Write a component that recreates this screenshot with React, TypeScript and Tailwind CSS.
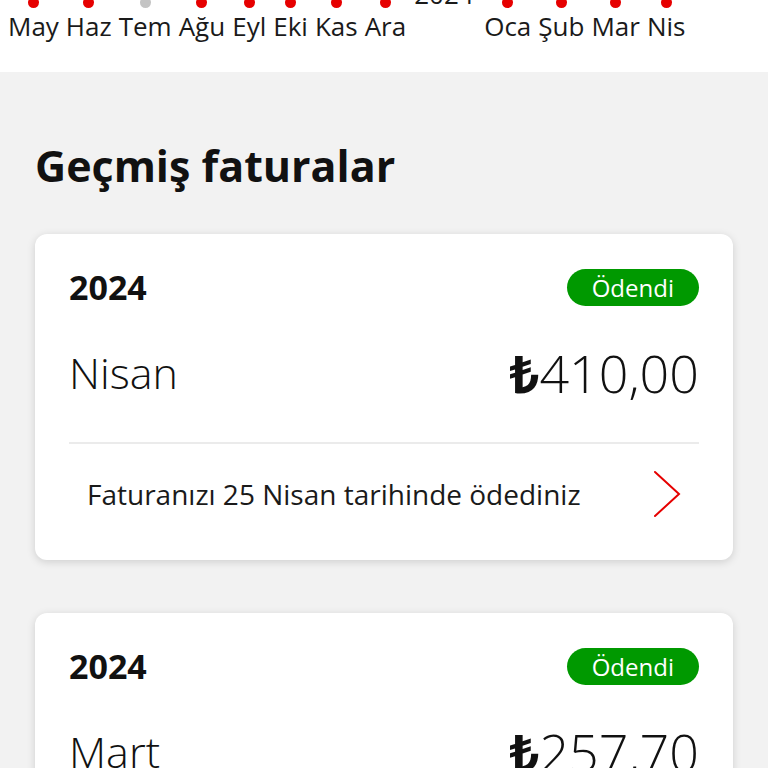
import React from 'react';

const months = [
  { label: 'May', active: true },
  { label: 'Haz', active: true },
  { label: 'Tem', active: false },
  { label: 'Ağu', active: true },
  { label: 'Eyl', active: true },
  { label: 'Eki', active: true },
  { label: 'Kas', active: true },
  { label: 'Ara', active: true },
];

const months2024 = ['Oca', 'Şub', 'Mar', 'Nis'];

const bills = [
  { year: '2024', month: 'Nisan', amount: '410,00', note: 'Faturanızı 25 Nisan tarihinde ödediniz' },
  { year: '2024', month: 'Mart', amount: '257,70', note: 'Faturanızı 25 Mart tarihinde ödediniz' },
];

function MonthItem({ label, active }: { label: string; active: boolean }) {
  return (
    <div className="flex flex-col items-center">
      <span className={`w-[11px] h-[11px] rounded-full ${active ? 'bg-[#e60000]' : 'bg-[#c4c4c4]'}`}></span>
      <span className="text-[26px] leading-[30px] text-[#1a1a1a] mt-[3px]">{label}</span>
    </div>
  );
}

function Chevron() {
  return (
    <svg width="30" height="48" viewBox="0 0 30 48" fill="none" className="shrink-0">
      <path d="M3 2 L27 24 L3 46" stroke="#e60000" strokeWidth="2" strokeLinecap="round" strokeLinejoin="miter" />
    </svg>
  );
}

export default function App() {
  return (
    <div className="min-h-screen bg-[#f2f2f2]" style={{ fontFamily: '"Open Sans", "Noto Sans", sans-serif' }}>
      {/* Timeline strip */}
      <div className="bg-white h-[72px] overflow-hidden">
        <div className="flex items-start gap-[7px] pl-[8px] -mt-[3px]">
          {months.map((m) => (
            <MonthItem key={m.label} label={m.label} active={m.active} />
          ))}
          <div className="w-[64px] relative">
            <span className="absolute left-[1px] -top-[18px] text-[26px] leading-[30px] text-[#1a1a1a]">2024</span>
          </div>
          {months2024.map((m) => (
            <MonthItem key={m} label={m} active />
          ))}
        </div>
      </div>

      {/* Past bills */}
      <div className="px-[35px] pt-[68px] pb-10">
        <h2 className="text-[43px] leading-[52px] font-bold text-[#111]">Geçmiş faturalar</h2>

        <div className="mt-[42px] flex flex-col gap-[53px]">
          {bills.map((b) => (
            <div key={b.month} className="bg-white rounded-[12px] shadow-[0_2px_8px_rgba(0,0,0,0.15)] px-[34px] pt-[33px] pb-[16px]">
              <div className="flex items-center justify-between">
                <span className="text-[34px] leading-[40px] font-bold text-[#111]">{b.year}</span>
                <span className="bg-[#009900] text-white text-[24px] leading-[37px] px-[25px] rounded-full">Ödendi</span>
              </div>
              <div className="flex items-end justify-between mt-[38px]">
                <span className="text-[43px] leading-[56px] font-light text-[#111]">{b.month}</span>
                <span className="text-[52px] leading-[56px] font-light text-[#111]">
                  <span className="font-bold">₺</span>
                  {b.amount}
                </span>
              </div>
              <div className="h-[2px] bg-[#ebebeb] mt-[41px]"></div>
              <div className="flex items-center justify-between pl-[18px] pr-[17px] py-[26px]">
                <span className="text-[28px] leading-[34px] text-[#1a1a1a]">{b.note}</span>
                <Chevron />
              </div>
            </div>
          ))}
        </div>
      </div>
    </div>
  );
}
